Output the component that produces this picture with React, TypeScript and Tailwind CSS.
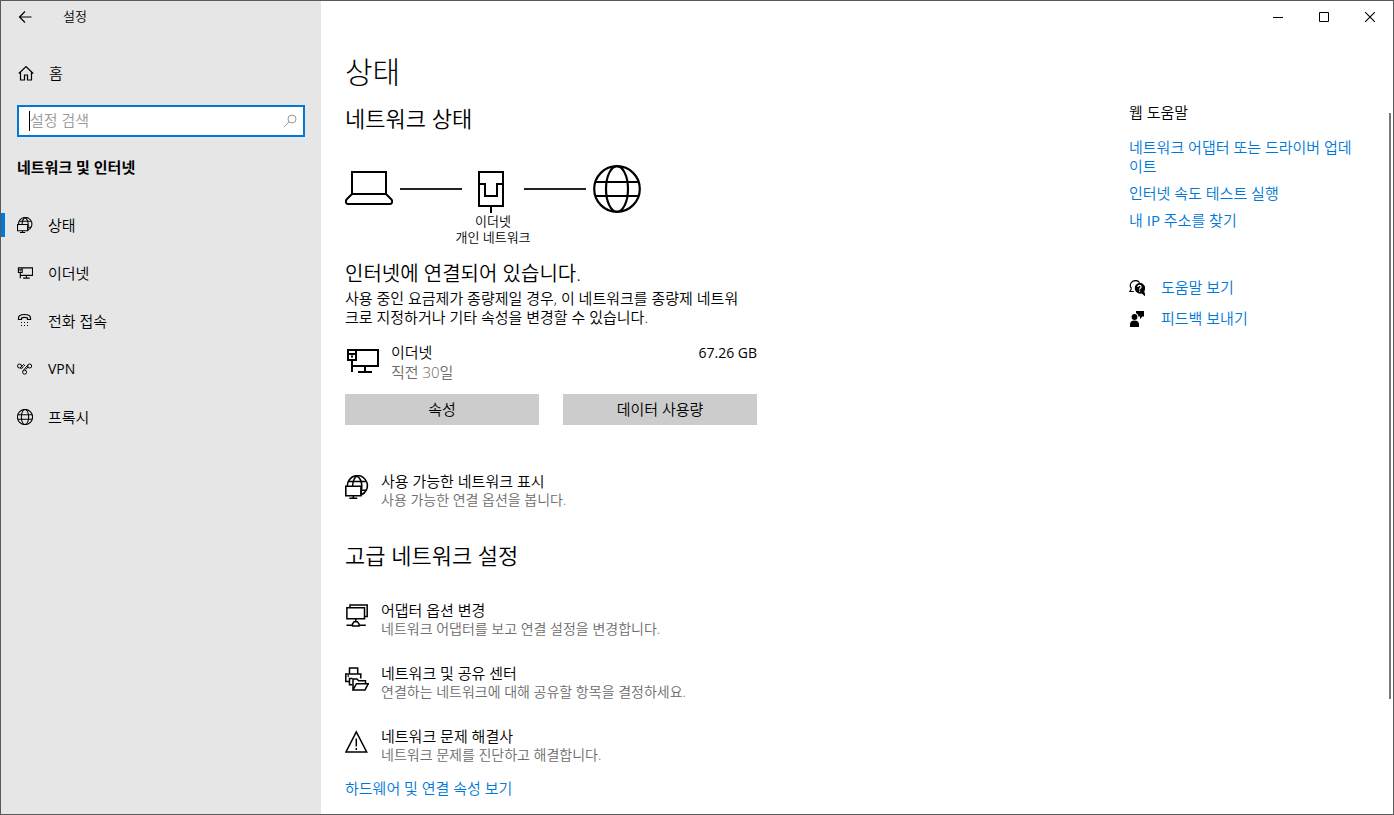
import type { ReactNode } from "react";

type IconProps = { className?: string };

function Line({ className = "", box, w = 1.5, children }: IconProps & { box: string; w?: number; children: ReactNode }) {
  return (
    <svg className={`shrink-0 ${className}`} viewBox={box} fill="none" stroke="currentColor" strokeWidth={w} aria-hidden="true">
      {children}
    </svg>
  );
}

const GlobeMonitor = ({ className }: IconProps) => (
  <Line className={className} box="0 0 24 24" w={1.6}>
    <path d="M2.4 11.3A10 10 0 1 1 16 19.9" />
    <path d="M7.6 11C7.8 6.5 9.4 2.5 12 .8c3.300 2.200 5 6.500 4.700 11.500-.1 2.500-.4 5-1 7" />
    <path d="M3.700 6.500h17M16 15.300h5" />
    <path d="M.8 11.300h15.200v9.400H.8zM8.300 20.700v2.600M4.300 23.200h8" />
  </Line>
);

const Ethernet = ({ className, w = 2 }: IconProps & { w?: number }) => (
  <Line className={className} box="0 0 34 28" w={w}>
    <path d="M11 3h22v16H7M3 3h8v10H3zM3 7h8M7 13v12M20 19v5M13 25h14" />
    <path d="M6 9.500h2" />
  </Line>
);

const Phone = ({ className }: IconProps) => (
  <Line className={className} box="0 0 16 16" w={1.2}>
    <path d="M1.500 6.500V5C1.500 3 4 1.500 7.500 1.500S13.500 3 13.500 5v1.500h-3V5C8.500 4.300 6.500 4.300 4.500 5v1.500z" />
    <path d="M4 9.500h1M7 9.500h1M10 9.500h1M4 12.500h1M7 12.500h1M10 12.500h1" />
  </Line>
);

const Vpn = ({ className }: IconProps) => (
  <Line className={className} box="0 0 16 16" w={1}>
    <circle cx="2.500" cy="5" r="2" />
    <circle cx="12.700" cy="5" r="2" />
    <circle cx="7.600" cy="11.200" r="2" />
    <path d="M4.300 6 6.500 3.500 8 4.800M11 6 8.800 8.500M11.300 3.500 6 9.800M4.300 7.800 6.500 5.800M3 7h1.300" />
  </Line>
);

const Globe = ({ className, w = 1 }: IconProps & { w?: number }) => (
  <Line className={className} box="0 0 48 48" w={w}>
    <circle cx="24" cy="24" r="22.800" />
    <ellipse cx="24" cy="24" rx="11" ry="22.800" />
    <path d="M2.500 17h43M2.500 31h43" />
  </Line>
);

const Laptop = () => (
  <Line className="size-12" box="0 0 48 48" w={2}>
    <path d="M7 7h34v22H7zM7 29l-5 5c-2 2-1.200 5 1 5h42c2.200 0 3-3 1-5l-5-5" />
  </Line>
);

const Port = () => (
  <Line className="size-12" box="0 0 48 48" w={2}>
    <path d="M10 7h24v34H10zM22 41v7M10 19h6v12h12V19h6" />
  </Line>
);

const Adapters = ({ className }: IconProps) => (
  <Line className={className} box="0 0 24 24">
    <path d="M5 3.500V1h17.200v11.500h-2.500M1.900 3.700h17.600v11H1.900zM10.700 14.700v2.800M7.500 20l1.500-2.300h3.500L14 20v2H7.500zM1.500 21.200h5.300M14 21.200h6.800" />
  </Line>
);

const Sharing = ({ className }: IconProps) => (
  <Line className={className} box="0 0 24 24">
    <path d="M4.500 7V1h8.200v6M4 14.500H.8V7h15v4.500M7.500 11.500H4.500v6.300h3M2.500 9h1.500" />
    <path d="M8 22.900V12h4l1.500 1.700h7v3M8 22.900l3.500-6.200h11.800L20 22.900z" />
  </Line>
);

const Warning = ({ className }: IconProps) => (
  <Line className={className} box="0 0 24 24">
    <path d="M11.300 1.800 1 22h20.700zM11.300 8.500v8M11.300 18v2" />
  </Line>
);

const Home = () => (
  <Line className="size-4" box="0 0 16 16" w={1.2}>
    <path d="M.8 8.500 8 1.500l7.200 7M2.500 7v8h4v-5h3v5h4V7" />
  </Line>
);

const Help = () => (
  <Line className="size-4" box="0 0 16 16" w={1.2}>
    <path d="M2.500 8.500 .8 11.500h4M2.500 8.500A4.800 4.800 0 0 1 2 3C4 0 9-.5 10.500 2.800" />
    <path d="M10.300 3.500a4.800 4.800 0 1 0 2.600 9.200l2.600 2.300-.8-4a4.800 4.800 0 0 0-4.400-7.500z" fill="currentColor" />
    <path d="M8.900 6.900c0-2 3.200-1.900 3.200 0 0 1.100-1.500 1.100-1.500 2.600M10.600 10.500v1.200" stroke="#fff" strokeWidth="1.200" />
  </Line>
);

const Feedback = () => (
  <svg className="size-4 shrink-0" viewBox="0 0 16 16" fill="currentColor" aria-hidden="true">
    <circle cx="5.500" cy="6" r="2.900" />
    <path d="M1 16v-2.500C1 11 2.500 9.500 5.500 9.500S10 11 10 13.500V16zM7 0h8v5.500h-1.500L11 8V5.500H9.300C9.300 3.700 8.500 2.700 7 2.200z" />
  </svg>
);

const navItems = [
  { label: "상태", icon: <GlobeMonitor className="size-4" />, active: true },
  { label: "이더넷", icon: <Ethernet className="h-3.5 w-4" w={2.4} /> },
  { label: "전화 접속", icon: <Phone className="size-4" /> },
  { label: "VPN", icon: <Vpn className="size-4" />, latin: true },
  { label: "프록시", icon: <Globe className="size-4" w={3.2} /> },
];

const advanced = [
  { title: "어댑터 옵션 변경", text: "네트워크 어댑터를 보고 연결 설정을 변경합니다.", icon: <Adapters className="size-6" /> },
  { title: "네트워크 및 공유 센터", text: "연결하는 네트워크에 대해 공유할 항목을 결정하세요.", icon: <Sharing className="size-6" /> },
  { title: "네트워크 문제 해결사", text: "네트워크 문제를 진단하고 해결합니다.", icon: <Warning className="size-6" /> },
];

function Option({ title, text, icon }: { title: string; text: string; icon: ReactNode }) {
  return (
    <a href="#" className="flex items-start gap-3">
      <span className="pt-[3px]">{icon}</span>
      <span className="flex flex-col whitespace-nowrap leading-[19px]">
        <span>{title}</span>
        <span className="text-sm leading-[18px] text-[#6b6b6b]">{text}</span>
      </span>
    </a>
  );
}

function Sidebar() {
  return (
    <aside className="flex w-80 shrink-0 flex-col bg-[#e6e6e6]">
      <div className="flex h-8 items-center gap-[30px] pl-4">
        <button type="button" aria-label="뒤로">
          <Line className="size-4" box="0 0 16 16" w={1.2}>
            <path d="M14.500 8H2.500M8 2.500 2.500 8 8 13.500" />
          </Line>
        </button>
        <span className="text-[13px]">설정</span>
      </div>
      <a href="#" className="mt-4 flex h-12 items-center gap-[15px] pl-[17px]">
        <Home />
        홈
      </a>
      <label className="mx-4 mt-2 flex h-8 items-center border-2 border-[#0078d7] bg-white pr-1.5 pl-2.5">
        <span className="h-5 w-px bg-black" />
        <input type="text" aria-label="설정 검색" placeholder="설정 검색" className="min-w-0 flex-1 bg-transparent pb-px caret-transparent outline-none placeholder:text-[#999]" />
        <Line className="size-3.5 text-[#999]" box="0 0 14 14" w={1}>
          <circle cx="9" cy="5" r="4" />
          <path d="M6 8 1 13" />
        </Line>
      </label>
      <h2 className="mt-5 pl-4 leading-5 font-bold">네트워크 및 인터넷</h2>
      <nav className="mt-6 flex flex-col">
        {navItems.map((item) => (
          <a key={item.label} href="#" className="flex h-12 items-center">
            <span className={item.active ? "mr-3 h-6 w-1 bg-[#0078d7]" : "mr-3 h-6 w-1"} />
            {item.icon}
            <span className={item.latin ? "ml-[15px] text-sm font-normal" : "ml-[15px]"}>{item.label}</span>
          </a>
        ))}
      </nav>
    </aside>
  );
}

function WindowControls() {
  return (
    <div className="flex h-8 shrink-0 justify-end">
      <button type="button" aria-label="최소화" className="flex w-[46px] items-center justify-center">
        <Line className="size-2.5" box="0 0 10 10" w={1}><path d="M0 5.500h10" /></Line>
      </button>
      <button type="button" aria-label="최대화" className="flex w-[46px] items-center justify-center">
        <Line className="size-2.5" box="0 0 10 10" w={1}><path d="M.5.500h9v9h-9z" /></Line>
      </button>
      <button type="button" aria-label="닫기" className="flex w-[46px] items-center justify-center">
        <Line className="size-2.5" box="0 0 10 10" w={1.1}><path d="m0 0 10 10M10 0 0 10" /></Line>
      </button>
    </div>
  );
}

function Status() {
  return (
    <div className="w-[412px] shrink-0 pt-[19px]">
      <h1 className="text-[30px] leading-10 font-light">상태</h1>
      <h2 className="mt-3 text-[22px] leading-7">네트워크 상태</h2>
      <div className="mt-[33px] w-[296px]">
        <div className="flex items-center justify-between">
          <Laptop />
          <span className="h-0.5 w-[62px] bg-[#222]" />
          <Port />
          <span className="h-0.5 w-[62px] bg-[#222]" />
          <Globe className="size-12" w={2.2} />
        </div>
        <p className="text-center text-[13px] leading-4">이더넷<br />개인 네트워크</p>
      </div>
      <h3 className="mt-[15px] text-xl leading-7">인터넷에 연결되어 있습니다.</h3>
      <p className="mt-px leading-[19px]">
        사용 중인 요금제가 종량제일 경우, 이 네트워크를 종량제 네트워<br />크로 지정하거나 기타 속성을 변경할 수 있습니다.
      </p>
      <div className="mt-[15px] flex gap-3">
        <Ethernet className="mt-[5px] h-7 w-[34px]" />
        <div className="flex-1 leading-5">
          <p>이더넷</p>
          <p className="text-[#6b6b6b]">직전 30일</p>
        </div>
        <p className="text-sm leading-[22px] font-normal">67.26 GB</p>
      </div>
      <div className="mt-3 grid grid-cols-2 gap-6">
        <button type="button" className="h-[31px] bg-[#ccc]">속성</button>
        <button type="button" className="h-[31px] bg-[#ccc]">데이터 사용량</button>
      </div>
      <div className="mt-[47px]">
        <Option title="사용 가능한 네트워크 표시" text="사용 가능한 연결 옵션을 봅니다." icon={<GlobeMonitor className="size-6" />} />
      </div>
      <h2 className="mt-8 text-[22px] leading-7">고급 네트워크 설정</h2>
      <div className="mt-8 flex flex-col gap-[26px]">
        {advanced.map((item) => <Option key={item.title} {...item} />)}
      </div>
      <a href="#" className="mt-3.5 block leading-5 text-[#0078d7]">하드웨어 및 연결 속성 보기</a>
    </div>
  );
}

function WebHelp() {
  return (
    <div className="w-60 shrink-0 pt-[70px] leading-[19px]">
      <h2>웹 도움말</h2>
      <div className="mt-4 flex flex-col gap-2 text-[#0078d7]">
        <a href="#">네트워크 어댑터 또는 드라이버 업데<br />이트</a>
        <a href="#">인터넷 속도 테스트 실행</a>
        <a href="#">내 <span className="font-normal">IP</span> 주소를 찾기</a>
      </div>
      <div className="mt-12 flex flex-col gap-3">
        <a href="#" className="flex items-center gap-4"><Help /><span className="text-[#0078d7]">도움말 보기</span></a>
        <a href="#" className="flex items-center gap-4"><Feedback /><span className="text-[#0078d7]">피드백 보내기</span></a>
      </div>
    </div>
  );
}

export default function App() {
  return (
    <div className="flex h-screen overflow-hidden border border-[#5a5a5a] bg-white font-['Open_Sans','Noto_Sans_CJK_KR',sans-serif] text-[15px] font-[350] text-black">
      <Sidebar />
      <main className="flex min-w-0 flex-1 flex-col">
        <WindowControls />
        <div className="flex min-h-0 flex-1 justify-between pr-0.5 pl-6">
          <Status />
          <div className="flex">
            <WebHelp />
            <div className="mt-20 ml-5 h-3/4 w-0.5 bg-[#7a7a7a]" />
          </div>
        </div>
      </main>
    </div>
  );
}
